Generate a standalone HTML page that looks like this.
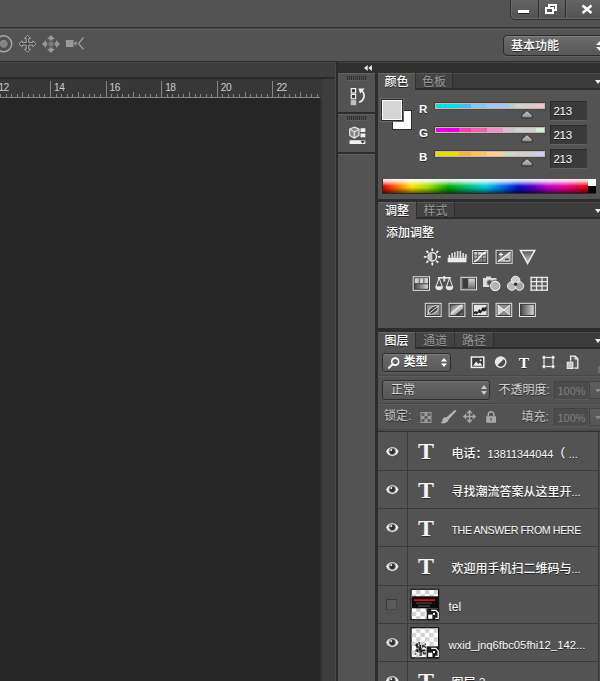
<!DOCTYPE html>
<html lang="zh-CN">
<head>
<meta charset="utf-8">
<title>Photoshop</title>
<style>
html,body{margin:0;padding:0;background:#535353;}
body{width:600px;height:681px;overflow:hidden;position:relative;font-family:"Liberation Sans","Noto Sans CJK SC",sans-serif;font-size:12px;color:#e6e6e6;}
#root{position:absolute;left:0;top:0;width:600px;height:681px;overflow:hidden;background:#535353;}
.a{position:absolute;}
.t{position:absolute;white-space:nowrap;line-height:14px;font-size:12px;color:#f0f0f0;text-shadow:0 1px 0 rgba(0,0,0,.55);}
svg{position:absolute;overflow:visible;}
.panel{position:absolute;background:#535353;box-shadow:inset 0 1px 0 #626262;}
.tabbar{position:absolute;left:0;top:0;right:0;height:15px;background:#3b3b3b;border-bottom:2px solid #2c2c2c;box-shadow:inset 0 1px 0 #4a4a4a;}
.tab{position:absolute;top:0;height:15px;box-sizing:border-box;border-right:1px solid #303030;background:#434343;box-shadow:inset 0 1px 0 #565656;}
.tab.on{background:#535353;height:17px;box-shadow:inset 0 1px 0 #666;}
.tab span{position:absolute;left:0;right:0;top:2px;text-align:center;font-size:12px;line-height:14px;color:#9a9a9a;text-shadow:0 1px 0 rgba(0,0,0,.4);}
.tab.on span{color:#fff;font-weight:500;text-shadow:0 1px 0 rgba(0,0,0,.6);}
.inp{position:absolute;background:#3a3a3a;box-shadow:inset 1px 1px 0 #2c2c2c, 0 1px 0 #606060;}
.dd{position:absolute;box-sizing:border-box;border:1px solid #2d2d2d;border-radius:3px;background:linear-gradient(#6b6b6b,#595959);box-shadow:inset 0 1px 0 #7c7c7c,0 1px 0 #5e5e5e;}
</style>
</head>
<body>
<div id="root">
<div class="a" style="left:0px;top:0px;width:600px;height:27px;background:#535353;"></div>
<div class="a" style="left:0px;top:27px;width:600px;height:1px;background:#2f2f2f;"></div>
<div class="a" style="left:0px;top:28px;width:600px;height:1px;background:#4b4b4b;"></div>
<div class="a" style="left:0px;top:29px;width:600px;height:1px;background:#5e5e5e;"></div>
<div class="a" style="left:510px;top:-2px;width:100px;height:20px;border:1px solid #2e2e2e;border-radius:0 0 0 5px;background:linear-gradient(#646464,#525252);box-shadow:inset 1px -1px 0 #6a6a6a;"><div class="a" style="left:27px;top:0;width:1px;height:19px;background:#2e2e2e;box-shadow:1px 0 0 #686868;"></div><div class="a" style="left:54px;top:0;width:1px;height:19px;background:#2e2e2e;box-shadow:1px 0 0 #686868;"></div></div>
<div class="a" style="left:518px;top:10px;width:11px;height:3px;background:#fff;box-shadow:0 1px 0 #222;"></div>
<svg style="left:545px;top:4px" width="13" height="11" viewBox="0 0 13 11"><g fill="none" stroke="#fff" stroke-width="2"><rect x="4" y="1" width="7" height="5"/><rect x="1" y="4" width="7" height="5" fill="#565656"/></g></svg>
<svg style="left:581px;top:5px" width="12" height="9" viewBox="0 0 12 9"><path d="M1.5 0.5 L10.5 8 M10.5 0.5 L1.5 8" stroke="#fff" stroke-width="2.6" fill="none"/></svg>
<div class="a" style="left:0px;top:30px;width:600px;height:31px;background:#535353;"></div>
<div class="a" style="left:0px;top:61px;width:600px;height:1px;background:#2e2e2e;"></div>
<div class="a" style="left:503px;top:35px;width:110px;height:19px;border:1px solid #2b2b2b;border-radius:4px;background:linear-gradient(#6d6d6d,#585858);box-shadow:inset 0 1px 0 #808080,0 1px 0 #626262;"></div>
<div class="t" style="left:511px;top:39px;color:#fff;font-weight:500;">基本功能</div>
<svg style="left:596px;top:41px" width="8" height="10" viewBox="0 0 8 10"><path d="M4 0 L0 4 L8 4 Z M0 6 L8 6 L4 10 Z" fill="#fff"/></svg>
<svg style="left:0;top:34px" width="90" height="22" viewBox="0 0 90 22"><g fill="none" stroke="#a8a8a8">
<circle cx="3.7" cy="9.8" r="8" stroke-width="1.4"/>
<circle cx="3.7" cy="9.8" r="4.6" fill="#858585" stroke="#444" stroke-width="1"/>
<path d="M27.5 1.3 L30.5 4.4 L28.7 4.4 L28.7 8.6 L32.9 8.6 L32.9 6.8 L36.0 9.8 L32.9 12.8 L32.9 11.0 L28.7 11.0 L28.7 15.2 L30.5 15.2 L27.5 18.3 L24.5 15.2 L26.3 15.2 L26.3 11.0 L22.1 11.0 L22.1 12.8 L19.0 9.8 L22.1 6.8 L22.1 8.6 L26.3 8.6 L26.3 4.4 L24.5 4.4 Z" stroke-width="1" fill="#404040"/>
</g>
<path d="M51.0 1.0 L55.0 5.0 L52.6 5.0 L52.6 8.4 L56.0 8.4 L56.0 6.0 L60.0 10.0 L56.0 14.0 L56.0 11.6 L52.6 11.6 L52.6 15.0 L55.0 15.0 L51.0 19.0 L47.0 15.0 L49.4 15.0 L49.4 11.6 L46.0 11.6 L46.0 14.0 L42.0 10.0 L46.0 6.0 L46.0 8.4 L49.4 8.4 L49.4 5.0 L47.0 5.0 Z" fill="#989898"/>
<circle cx="51" cy="10" r="3.3" fill="#7a7a7a" stroke="#484848" stroke-width=".9"/>
<g fill="#999">
<rect x="66" y="6" width="7.5" height="7"/>
<path d="M73.5 9.5 L76.5 7 L76.5 12 Z"/>
</g>
<path d="M83.5 3.5 L78.5 9.5 L83.5 15.5" fill="none" stroke="#a0a0a0" stroke-width="1.2"/></svg>
<div class="a" style="left:0px;top:62px;width:336px;height:15px;background:#3d3d3d;box-shadow:inset 0 1px 0 #474747;"></div>
<div class="a" style="left:0px;top:77px;width:336px;height:2px;background:#2a2a2a;"></div>
<div class="a" style="left:0px;top:79px;width:336px;height:1px;background:#313131;"></div>
<div class="a" style="left:0px;top:80px;width:322px;height:18px;background:#373737;"></div>
<div class="a" style="left:0px;top:98px;width:320px;height:583px;background:#262626;"></div>
<div class="a" style="left:320px;top:98px;width:2px;height:583px;background:#2f2f2f;"></div>
<div class="a" style="left:322px;top:79px;width:13px;height:602px;background:#3d3d3d;"></div>
<div class="a" style="left:335px;top:62px;width:1px;height:619px;background:#4b4b4b;"></div>
<div class="a" style="left:336px;top:62px;width:2px;height:619px;background:#2b2b2b;"></div>
<svg style="left:0;top:79px" width="322" height="19" viewBox="0 0 322 19"><rect x="0" y="18" width="320" height="1" fill="#868686"/><rect x="0" y="15" width="1" height="3" fill="#868686"/><rect x="6" y="15" width="1" height="3" fill="#868686"/><rect x="11" y="15" width="1" height="3" fill="#868686"/><rect x="17" y="15" width="1" height="3" fill="#868686"/><rect x="22" y="13" width="1" height="5" fill="#868686"/><rect x="28" y="15" width="1" height="3" fill="#868686"/><rect x="33" y="15" width="1" height="3" fill="#868686"/><rect x="39" y="15" width="1" height="3" fill="#868686"/><rect x="44" y="15" width="1" height="3" fill="#868686"/><text x="-1.6" y="12.3" font-size="10.2" letter-spacing="-0.5" fill="#cdcdcd" font-family="Liberation Sans, sans-serif">12</text><rect x="50" y="2" width="1" height="16" fill="#868686"/><rect x="56" y="15" width="1" height="3" fill="#868686"/><rect x="61" y="15" width="1" height="3" fill="#868686"/><rect x="67" y="15" width="1" height="3" fill="#868686"/><rect x="72" y="15" width="1" height="3" fill="#868686"/><rect x="78" y="13" width="1" height="5" fill="#868686"/><rect x="83" y="15" width="1" height="3" fill="#868686"/><rect x="89" y="15" width="1" height="3" fill="#868686"/><rect x="94" y="15" width="1" height="3" fill="#868686"/><rect x="100" y="15" width="1" height="3" fill="#868686"/><text x="54.0" y="12.3" font-size="10.2" letter-spacing="-0.5" fill="#cdcdcd" font-family="Liberation Sans, sans-serif">14</text><rect x="106" y="2" width="1" height="16" fill="#868686"/><rect x="111" y="15" width="1" height="3" fill="#868686"/><rect x="117" y="15" width="1" height="3" fill="#868686"/><rect x="122" y="15" width="1" height="3" fill="#868686"/><rect x="128" y="15" width="1" height="3" fill="#868686"/><rect x="133" y="13" width="1" height="5" fill="#868686"/><rect x="139" y="15" width="1" height="3" fill="#868686"/><rect x="145" y="15" width="1" height="3" fill="#868686"/><rect x="150" y="15" width="1" height="3" fill="#868686"/><rect x="156" y="15" width="1" height="3" fill="#868686"/><text x="109.6" y="12.3" font-size="10.2" letter-spacing="-0.5" fill="#cdcdcd" font-family="Liberation Sans, sans-serif">16</text><rect x="161" y="2" width="1" height="16" fill="#868686"/><rect x="167" y="15" width="1" height="3" fill="#868686"/><rect x="172" y="15" width="1" height="3" fill="#868686"/><rect x="178" y="15" width="1" height="3" fill="#868686"/><rect x="183" y="15" width="1" height="3" fill="#868686"/><rect x="189" y="13" width="1" height="5" fill="#868686"/><rect x="195" y="15" width="1" height="3" fill="#868686"/><rect x="200" y="15" width="1" height="3" fill="#868686"/><rect x="206" y="15" width="1" height="3" fill="#868686"/><rect x="211" y="15" width="1" height="3" fill="#868686"/><text x="165.2" y="12.3" font-size="10.2" letter-spacing="-0.5" fill="#cdcdcd" font-family="Liberation Sans, sans-serif">18</text><rect x="217" y="2" width="1" height="16" fill="#868686"/><rect x="222" y="15" width="1" height="3" fill="#868686"/><rect x="228" y="15" width="1" height="3" fill="#868686"/><rect x="233" y="15" width="1" height="3" fill="#868686"/><rect x="239" y="15" width="1" height="3" fill="#868686"/><rect x="245" y="13" width="1" height="5" fill="#868686"/><rect x="250" y="15" width="1" height="3" fill="#868686"/><rect x="256" y="15" width="1" height="3" fill="#868686"/><rect x="261" y="15" width="1" height="3" fill="#868686"/><rect x="267" y="15" width="1" height="3" fill="#868686"/><text x="220.8" y="12.3" font-size="10.2" letter-spacing="-0.5" fill="#cdcdcd" font-family="Liberation Sans, sans-serif">20</text><rect x="272" y="2" width="1" height="16" fill="#868686"/><rect x="278" y="15" width="1" height="3" fill="#868686"/><rect x="284" y="15" width="1" height="3" fill="#868686"/><rect x="289" y="15" width="1" height="3" fill="#868686"/><rect x="295" y="15" width="1" height="3" fill="#868686"/><rect x="300" y="13" width="1" height="5" fill="#868686"/><rect x="306" y="15" width="1" height="3" fill="#868686"/><rect x="311" y="15" width="1" height="3" fill="#868686"/><rect x="317" y="15" width="1" height="3" fill="#868686"/><text x="276.4" y="12.3" font-size="10.2" letter-spacing="-0.5" fill="#cdcdcd" font-family="Liberation Sans, sans-serif">22</text></svg>
<div class="a" style="left:338px;top:62px;width:262px;height:619px;background:#2c2c2c;"></div>
<div class="a" style="left:338px;top:62px;width:262px;height:1px;background:#444;"></div>
<div class="a" style="left:338px;top:63px;width:262px;height:10px;background:#303030;"></div>
<svg style="left:363.5px;top:64.5px" width="8" height="6" viewBox="0 0 8 6"><path d="M3.7 0 L3.7 6 L0 3 Z M7.9 0 L7.9 6 L4.2 3 Z" fill="#e8e8e8"/></svg>
<div class="panel" style="left:338px;top:73px;width:37px;height:39px;"></div>
<div class="panel" style="left:338px;top:114px;width:37px;height:38px;"></div>
<div class="panel" style="left:338px;top:154px;width:37px;height:527px;"></div>
<svg style="left:338px;top:73px" width="37" height="82" viewBox="338 73 37 82"><rect x="347" y="76" width="1" height="4" fill="#2c2c2c"/><rect x="347" y="80" width="1" height="1" fill="#686868"/><rect x="349" y="76" width="1" height="4" fill="#2c2c2c"/><rect x="349" y="80" width="1" height="1" fill="#686868"/><rect x="351" y="76" width="1" height="4" fill="#2c2c2c"/><rect x="351" y="80" width="1" height="1" fill="#686868"/><rect x="353" y="76" width="1" height="4" fill="#2c2c2c"/><rect x="353" y="80" width="1" height="1" fill="#686868"/><rect x="355" y="76" width="1" height="4" fill="#2c2c2c"/><rect x="355" y="80" width="1" height="1" fill="#686868"/><rect x="357" y="76" width="1" height="4" fill="#2c2c2c"/><rect x="357" y="80" width="1" height="1" fill="#686868"/><rect x="359" y="76" width="1" height="4" fill="#2c2c2c"/><rect x="359" y="80" width="1" height="1" fill="#686868"/><rect x="361" y="76" width="1" height="4" fill="#2c2c2c"/><rect x="361" y="80" width="1" height="1" fill="#686868"/><rect x="363" y="76" width="1" height="4" fill="#2c2c2c"/><rect x="363" y="80" width="1" height="1" fill="#686868"/><rect x="365" y="76" width="1" height="4" fill="#2c2c2c"/><rect x="365" y="80" width="1" height="1" fill="#686868"/><rect x="347" y="116" width="1" height="4" fill="#2c2c2c"/><rect x="347" y="120" width="1" height="1" fill="#686868"/><rect x="349" y="116" width="1" height="4" fill="#2c2c2c"/><rect x="349" y="120" width="1" height="1" fill="#686868"/><rect x="351" y="116" width="1" height="4" fill="#2c2c2c"/><rect x="351" y="120" width="1" height="1" fill="#686868"/><rect x="353" y="116" width="1" height="4" fill="#2c2c2c"/><rect x="353" y="120" width="1" height="1" fill="#686868"/><rect x="355" y="116" width="1" height="4" fill="#2c2c2c"/><rect x="355" y="120" width="1" height="1" fill="#686868"/><rect x="357" y="116" width="1" height="4" fill="#2c2c2c"/><rect x="357" y="120" width="1" height="1" fill="#686868"/><rect x="359" y="116" width="1" height="4" fill="#2c2c2c"/><rect x="359" y="120" width="1" height="1" fill="#686868"/><rect x="361" y="116" width="1" height="4" fill="#2c2c2c"/><rect x="361" y="120" width="1" height="1" fill="#686868"/><rect x="363" y="116" width="1" height="4" fill="#2c2c2c"/><rect x="363" y="120" width="1" height="1" fill="#686868"/><rect x="365" y="116" width="1" height="4" fill="#2c2c2c"/><rect x="365" y="120" width="1" height="1" fill="#686868"/>
<g fill="#3a3a3a" stroke="#f0f0f0" stroke-width="1.2"><rect x="351.3" y="88.6" width="4.3" height="4.3"/><rect x="351.3" y="94.4" width="4.3" height="4.3"/></g>
<rect x="350.7" y="100" width="5.5" height="5.2" fill="#bdbdbd"/>
<path d="M359 102.3 C364.5 100.5 365.8 94 361.2 90.2" fill="none" stroke="#f0f0f0" stroke-width="1.7"/>
<path d="M358.4 88.4 L364.6 88.6 L360.2 93.6 Z" fill="#f0f0f0"/>
<path d="M354.3 127 L359 129.2 L359 135.4 L354.3 138 L349.7 135.4 L349.7 129.2 Z" fill="#868686" stroke="#f0f0f0" stroke-width="1.1"/>
<path d="M349.9 129.4 L354.3 131.8 L358.8 129.4 M354.3 131.8 L354.3 137.6" fill="none" stroke="#f0f0f0" stroke-width="1"/>
<rect x="360.5" y="128.2" width="4.8" height="3.8" fill="#f0f0f0"/><rect x="360.5" y="133.5" width="4.8" height="3.8" fill="#f0f0f0"/>
<rect x="349.6" y="140.2" width="15.7" height="3.8" fill="#f0f0f0"/><path d="M360.6 140.8 L364.8 140.8 L362.7 143.6 Z" fill="#222"/>
</svg>
<div class="panel" style="left:378px;top:73px;width:222px;height:126px;">
<div class="tabbar"></div><div class="tab on" style="left:0;width:38px;"><span>颜色</span></div><div class="tab" style="left:38px;width:37px;"><span>色板</span></div>
<svg style="left:217px;top:7px" width="6" height="4" viewBox="0 0 6 4"><path d="M0 0 L6 0 L3 4 Z" fill="#f0f0f0"/></svg>
<div class="a" style="left:14px;top:37px;width:18px;height:18px;background:#fff;border:1px solid #2a2a2a;"></div>
<div class="a" style="left:3px;top:26px;width:20px;height:20px;background:#d5d5d5;border:1px solid #2a2a2a;box-shadow:inset 0 0 0 1px #fff, 0 0 0 1px #6a6a6a;"></div>
<div class="t" style="left:41px;top:29px;font-weight:bold;font-size:11.5px;color:#fff;">R</div>
<div class="t" style="left:41px;top:53px;font-weight:bold;font-size:11.5px;color:#fff;">G</div>
<div class="t" style="left:41px;top:77px;font-weight:bold;font-size:11.5px;color:#fff;">B</div>
<div class="a" style="left:57px;top:30px;width:110px;height:6px;background:#cdb8b0;box-shadow:-1px -1px 0 #3c3c3c,0 0 0 1px #484848;"><div class="a" style="left:1px;top:1px;width:23px;height:4px;background:#00e0e0;"></div><div class="a" style="left:24px;top:1px;width:12px;height:4px;background:#48b8f8;"></div><div class="a" style="left:36px;top:1px;width:16px;height:4px;background:#80c8f8;"></div><div class="a" style="left:52px;top:1px;width:16px;height:4px;background:#a0c8f8;"></div><div class="a" style="left:68px;top:1px;width:12px;height:4px;background:linear-gradient(90deg,#a0c8f8 58%,#b0d8b0 58%);"></div><div class="a" style="left:80px;top:1px;width:21px;height:4px;background:#d0d0d0;"></div><div class="a" style="left:101px;top:1px;width:8px;height:4px;background:#f8c0c8;"></div></div><svg style="left:143px;top:37px" width="12" height="9" viewBox="0 0 12 9"><defs><linearGradient id="th103" x1="0" y1="0" x2="0" y2="1"><stop offset="0" stop-color="#c8c8c8"/><stop offset="1" stop-color="#8c8c8c"/></linearGradient></defs><path d="M6 0.6 L11.3 5 L11.3 7.9 L0.7 7.9 L0.7 5 Z" fill="url(#th103)" stroke="#2c2c2c" stroke-width="1" stroke-linejoin="round"/></svg>
<div class="a" style="left:57px;top:54px;width:110px;height:6px;background:#cdb8b0;box-shadow:-1px -1px 0 #3c3c3c,0 0 0 1px #484848;"><div class="a" style="left:1px;top:1px;width:23px;height:4px;background:#e000e0;"></div><div class="a" style="left:24px;top:1px;width:12px;height:4px;background:#f040b0;"></div><div class="a" style="left:36px;top:1px;width:16px;height:4px;background:#f060b0;"></div><div class="a" style="left:52px;top:1px;width:16px;height:4px;background:#f090c8;"></div><div class="a" style="left:68px;top:1px;width:12px;height:4px;background:#d0c0d0;"></div><div class="a" style="left:80px;top:1px;width:21px;height:4px;background:#d0d0d0;"></div><div class="a" style="left:101px;top:1px;width:8px;height:4px;background:#d0f0d0;"></div></div><svg style="left:143px;top:61px" width="12" height="9" viewBox="0 0 12 9"><defs><linearGradient id="th127" x1="0" y1="0" x2="0" y2="1"><stop offset="0" stop-color="#c8c8c8"/><stop offset="1" stop-color="#8c8c8c"/></linearGradient></defs><path d="M6 0.6 L11.3 5 L11.3 7.9 L0.7 7.9 L0.7 5 Z" fill="url(#th127)" stroke="#2c2c2c" stroke-width="1" stroke-linejoin="round"/></svg>
<div class="a" style="left:57px;top:78px;width:110px;height:6px;background:#cdb8b0;box-shadow:-1px -1px 0 #3c3c3c,0 0 0 1px #484848;"><div class="a" style="left:1px;top:1px;width:23px;height:4px;background:#e0e000;"></div><div class="a" style="left:24px;top:1px;width:12px;height:4px;background:#ffb040;"></div><div class="a" style="left:36px;top:1px;width:16px;height:4px;background:#ffc060;"></div><div class="a" style="left:52px;top:1px;width:16px;height:4px;background:#ffd090;"></div><div class="a" style="left:68px;top:1px;width:12px;height:4px;background:#c0e0c0;"></div><div class="a" style="left:80px;top:1px;width:21px;height:4px;background:#d0d0d0;"></div><div class="a" style="left:101px;top:1px;width:8px;height:4px;background:#c8d0f8;"></div></div><svg style="left:143px;top:85px" width="12" height="9" viewBox="0 0 12 9"><defs><linearGradient id="th151" x1="0" y1="0" x2="0" y2="1"><stop offset="0" stop-color="#c8c8c8"/><stop offset="1" stop-color="#8c8c8c"/></linearGradient></defs><path d="M6 0.6 L11.3 5 L11.3 7.9 L0.7 7.9 L0.7 5 Z" fill="url(#th151)" stroke="#2c2c2c" stroke-width="1" stroke-linejoin="round"/></svg>
<div class="inp" style="left:172px;top:28px;width:37px;height:19px;"></div>
<div class="t" style="left:175.5px;top:31px;font-size:11.5px;letter-spacing:-0.3px;color:#fff;">213</div>
<div class="inp" style="left:172px;top:52px;width:37px;height:19px;"></div>
<div class="t" style="left:175.5px;top:55px;font-size:11.5px;letter-spacing:-0.3px;color:#fff;">213</div>
<div class="inp" style="left:172px;top:76px;width:37px;height:19px;"></div>
<div class="t" style="left:175.5px;top:79px;font-size:11.5px;letter-spacing:-0.3px;color:#fff;">213</div>
<div class="a" style="left:4px;top:106px;width:214px;height:15px;background:#2a2a2a;">
<div class="a" style="left:1px;top:0;width:205px;height:14px;background:linear-gradient(90deg,#e00000 0%,#ff5000 5%,#ffe000 14%,#a0e000 22%,#00a800 32%,#00c070 41%,#00c8e0 50%,#0070e8 58%,#0010c8 66%,#5000c0 73%,#c000c8 81%,#e80090 89%,#e00000 100%);"></div>
<div class="a" style="left:1px;top:0;width:205px;height:14px;background:linear-gradient(180deg,rgba(255,255,255,.95) 0%,rgba(255,255,255,.75) 18%,rgba(255,255,255,0) 52%,rgba(0,0,0,0) 60%,rgba(0,0,0,.6) 100%);"></div>
<div class="a" style="left:206px;top:0;width:8px;height:7px;background:#fff;"></div>
<div class="a" style="left:206px;top:7px;width:8px;height:7px;background:#000;"></div>
</div>
</div>
<div class="panel" style="left:378px;top:202px;width:222px;height:126px;">
<div class="tabbar"></div><div class="tab on" style="left:0;width:39px;"><span>调整</span></div><div class="tab" style="left:39px;width:38px;"><span>样式</span></div>
<svg style="left:217px;top:7px" width="6" height="4" viewBox="0 0 6 4"><path d="M0 0 L6 0 L3 4 Z" fill="#f0f0f0"/></svg>
<div class="t" style="left:8px;top:24px;color:#fff;font-weight:500;">添加调整</div>
<svg style="left:0;top:0" width="222" height="126" viewBox="378 202 222 126"><defs><linearGradient id="gv" x1="0" y1="0" x2="0" y2="1"><stop offset="0" stop-color="#d8d8d8"/><stop offset="1" stop-color="#6e6e6e"/></linearGradient><linearGradient id="gv2" x1="0" y1="0" x2="0" y2="1"><stop offset="0" stop-color="#555"/><stop offset="1" stop-color="#cfcfcf"/></linearGradient><linearGradient id="gh" x1="0" y1="0" x2="1" y2="0"><stop offset="0" stop-color="#4a4a4a"/><stop offset="1" stop-color="#d4d4d4"/></linearGradient><linearGradient id="gd" x1="0" y1="0" x2="1" y2="1"><stop offset="0" stop-color="#5a5a5a"/><stop offset=".5" stop-color="#c8c8c8"/><stop offset="1" stop-color="#5a5a5a"/></linearGradient></defs><g stroke="#f0f0f0" stroke-width="1.8" stroke-linecap="round"><line x1="438.7" y1="256.8" x2="440.0" y2="256.8"/><line x1="436.8" y1="261.3" x2="437.7" y2="262.2"/><line x1="432.3" y1="263.2" x2="432.3" y2="264.5"/><line x1="427.8" y1="261.3" x2="426.9" y2="262.2"/><line x1="425.9" y1="256.8" x2="424.6" y2="256.8"/><line x1="427.8" y1="252.3" x2="426.9" y2="251.4"/><line x1="432.3" y1="250.4" x2="432.3" y2="249.1"/><line x1="436.8" y1="252.3" x2="437.7" y2="251.4"/></g><circle cx="432.3" cy="256.8" r="4.2" fill="#4a4a4a" stroke="#f0f0f0" stroke-width="1.4"/><path d="M432.3 253.2 a3.6 3.6 0 0 0 0 7.2 Z" fill="#c8c8c8"/><rect x="447.7" y="258" width="18.8" height="4.3" fill="#ececec"/><rect x="448.6" y="255.0" width="1.5" height="3.0" fill="#e4e4e4"/><rect x="450.1" y="256.9" width="1.3" height="1.0" fill="#8c8c8c"/><rect x="451.4" y="253.0" width="1.5" height="5.0" fill="#e4e4e4"/><rect x="452.9" y="256.2" width="1.3" height="1.8" fill="#8c8c8c"/><rect x="454.1" y="252.0" width="1.5" height="6.0" fill="#e4e4e4"/><rect x="455.6" y="255.9" width="1.3" height="2.1" fill="#8c8c8c"/><rect x="456.9" y="251.0" width="1.5" height="7.0" fill="#e4e4e4"/><rect x="458.4" y="255.6" width="1.3" height="2.4" fill="#8c8c8c"/><rect x="459.6" y="251.0" width="1.5" height="7.0" fill="#e4e4e4"/><rect x="461.1" y="255.6" width="1.3" height="2.4" fill="#8c8c8c"/><rect x="462.4" y="253.0" width="1.5" height="5.0" fill="#e4e4e4"/><rect x="463.9" y="256.2" width="1.3" height="1.8" fill="#8c8c8c"/><rect x="465.1" y="254.0" width="1.5" height="4.0" fill="#e4e4e4"/><rect x="466.6" y="256.6" width="1.3" height="1.4" fill="#8c8c8c"/><rect x="472.2" y="250.0" width="16.0" height="14.0" fill="#e6e6e6"/><rect x="473.2" y="251.0" width="14.0" height="12.0" fill="#3a3a3a"/><rect x="474.2" y="252.0" width="12.0" height="10.0" fill="url(#gv)"/><g stroke="#555" stroke-width=".8"><line x1="477.5" y1="251.8" x2="477.5" y2="261.8"/><line x1="482.5" y1="251.8" x2="482.5" y2="261.8"/><line x1="473.8" y1="255.3" x2="486.8" y2="255.3"/><line x1="473.8" y1="258.6" x2="486.8" y2="258.6"/></g><path d="M474 261.5 C480 261 480 252.5 486.5 252" fill="none" stroke="#fff" stroke-width="1.4"/><rect x="495.6" y="249.8" width="17.0" height="14.0" fill="#e6e6e6"/><rect x="496.6" y="250.8" width="15.0" height="12.0" fill="#3a3a3a"/><rect x="497.6" y="251.8" width="13.0" height="10.0" fill="#6a6a6a"/><path d="M510.6 251.8 L510.6 261.8 L497.6 261.8 Z" fill="#c4c4c4"/><path d="M497.8 261.6 L510.4 252" stroke="#f4f4f4" stroke-width="1.2"/><path d="M499 254.5 h4 M501 252.5 v4" stroke="#fff" stroke-width="1.1"/><path d="M505 259.3 h4" stroke="#333" stroke-width="1.2"/><path d="M520.4 250.4 L534.8 250.4 L527.6 263.4 Z" fill="url(#gv2)" stroke="#ececec" stroke-width="1.5" stroke-linejoin="miter"/><rect x="412.7" y="276.3" width="17.3" height="14.5" fill="#e6e6e6"/><rect x="413.7" y="277.3" width="15.3" height="12.5" fill="#3a3a3a"/><rect x="414.7" y="278.3" width="13.3" height="10.5" fill="url(#gh)"/><rect x="414.7" y="278.3" width="13.3" height="5" fill="#d0d0d0"/><rect x="418.7" y="278.3" width="1" height="5" fill="#555"/><rect x="423.4" y="278.3" width="1" height="5" fill="#555"/><rect x="414.7" y="283.3" width="13.3" height="1" fill="#444"/><g fill="#e8e8e8"><rect x="437.8" y="277" width="13" height="1.6"/><rect x="443.4" y="276" width="1.8" height="5.5"/><path d="M439.1 278 L435.9 287 L442.3 287 Z" fill="none" stroke="#e8e8e8" stroke-width="1"/><path d="M435.3 286.5 h7.6 a3.8 3.8 0 0 1 -7.6 0 Z"/><path d="M449.5 278 L446.3 287 L452.7 287 Z" fill="none" stroke="#e8e8e8" stroke-width="1"/><path d="M445.7 286.5 h7.6 a3.8 3.8 0 0 1 -7.6 0 Z"/></g><rect x="460.5" y="276.8" width="16.5" height="13.5" fill="#e6e6e6"/><rect x="461.5" y="277.8" width="14.5" height="11.5" fill="#3a3a3a"/><rect x="462.5" y="278.8" width="12.5" height="9.5" fill="#d0d0d0"/><rect x="462.5" y="278.8" width="6" height="9.5" fill="#3c3c3c"/><rect x="468.5" y="278.8" width="6.5" height="9.5" fill="url(#gv)"/><path d="M483 278 h3 v-1.6 h5 v1.6 h5.5 v9 h-13.5 Z" fill="#dcdcdc"/><circle cx="489.5" cy="282.5" r="2.6" fill="#555" stroke="#999" stroke-width=".8"/><circle cx="495.3" cy="286" r="4.8" fill="#b4b4b4" stroke="#f0f0f0" stroke-width="1.2"/><circle cx="495.3" cy="286" r="5.8" fill="none" stroke="#444" stroke-width=".7"/><circle cx="515.6" cy="280.5" r="4.3" fill="#e2e2e2" fill-opacity=".85" stroke="#f2f2f2" stroke-width="1"/><circle cx="511.8" cy="286.0" r="4.3" fill="#c8c8c8" fill-opacity=".85" stroke="#f2f2f2" stroke-width="1"/><circle cx="519.4" cy="286.0" r="4.3" fill="#b0b0b0" fill-opacity=".85" stroke="#f2f2f2" stroke-width="1"/><path d="M515.6 284.5 L512.8 282.5 L515.6 279 L518.4 282.5 Z" fill="#3a3a3a" opacity=".0"/><circle cx="515.6" cy="284.3" r="1.8" fill="#333"/><rect x="530.5" y="276.8" width="17.5" height="14" fill="#5c5c5c"/><g fill="#e8e8e8"><rect x="530.5" y="276.8" width="1.3" height="14"/><rect x="535.9" y="276.8" width="1.3" height="14"/><rect x="541.3" y="276.8" width="1.3" height="14"/><rect x="546.7" y="276.8" width="1.3" height="14"/><rect x="530.5" y="276.8" width="17.5" height="1.3"/><rect x="530.5" y="281.0" width="17.5" height="1.3"/><rect x="530.5" y="285.3" width="17.5" height="1.3"/><rect x="530.5" y="289.5" width="17.5" height="1.3"/></g><rect x="424.8" y="302.8" width="16.8" height="14.2" fill="#e6e6e6"/><rect x="425.8" y="303.8" width="14.8" height="12.2" fill="#3a3a3a"/><rect x="426.8" y="304.8" width="12.8" height="10.2" fill="#8a8a8a"/><ellipse cx="433.2" cy="310" rx="5.6" ry="3.2" transform="rotate(-35 433.2 310)" fill="#444" stroke="#e8e8e8" stroke-width="1"/><path d="M427 315 L439.5 305" stroke="#ddd" stroke-width="1"/><rect x="448.6" y="302.8" width="16.8" height="14.2" fill="#e6e6e6"/><rect x="449.6" y="303.8" width="14.8" height="12.2" fill="#3a3a3a"/><rect x="450.6" y="304.8" width="12.8" height="10.2" fill="url(#gd)"/><path d="M450.6 313 L460 304.8 L463.4 304.8 L450.6 315 Z" fill="#e0e0e0"/><path d="M455 315 L463.4 308.5 L463.4 312 L459.5 315 Z" fill="#444"/><rect x="471.8" y="302.8" width="16.8" height="14.2" fill="#e6e6e6"/><rect x="472.8" y="303.8" width="14.8" height="12.2" fill="#3a3a3a"/><rect x="473.8" y="304.8" width="12.8" height="10.2" fill="#e4e4e4"/><path d="M473.8 312 l2 -1 l1.5 1 l2 -3 l1.5 1.5 l2 -3.5 l1.5 1 l2.3 -2 v4 l-2 1.5 l-2 -0.5 l-2 2.5 l-2 -1 l-2 2 l-1.5 -1 l-1.3 1 Z" fill="#222"/><rect x="495.6" y="302.8" width="16.6" height="14.2" fill="#e6e6e6"/><rect x="496.6" y="303.8" width="14.6" height="12.2" fill="#3a3a3a"/><rect x="497.6" y="304.8" width="12.6" height="10.2" fill="#8c8c8c"/><path d="M497.6 304.8 L503.9 310 L497.6 315 Z" fill="#d8d8d8"/><path d="M510.2 304.8 L503.9 310 L510.2 315 Z" fill="#c0c0c0"/><path d="M497.6 304.8 L510.2 315 M510.2 304.8 L497.6 315" stroke="#f4f4f4" stroke-width="1"/><rect x="519.0" y="302.8" width="16.8" height="14.2" fill="#e6e6e6"/><rect x="520.0" y="303.8" width="14.8" height="12.2" fill="#3a3a3a"/><rect x="521.0" y="304.8" width="12.8" height="10.2" fill="url(#gh)"/></svg>
</div>
<div class="panel" style="left:378px;top:332px;width:222px;height:349px;">
<div class="tabbar"></div><div class="tab on" style="left:0;width:38px;"><span>图层</span></div><div class="tab" style="left:38px;width:39px;"><span>通道</span></div><div class="tab" style="left:77px;width:39px;"><span>路径</span></div>
<svg style="left:217px;top:7px" width="6" height="4" viewBox="0 0 6 4"><path d="M0 0 L6 0 L3 4 Z" fill="#f0f0f0"/></svg>
<div class="dd" style="left:4px;top:21px;width:69px;height:19px;"></div>
<svg style="left:10px;top:25px" width="12" height="12" viewBox="0 0 12 12"><circle cx="7.2" cy="4.6" r="3.5" fill="none" stroke="#fff" stroke-width="1.6"/><path d="M4.6 7.2 L0.9 10.9" stroke="#fff" stroke-width="2" stroke-linecap="round"/></svg>
<div class="t" style="left:25.5px;top:23px;color:#fff;font-weight:bold;">类型</div>
<svg style="left:62.5px;top:26px" width="6" height="9" viewBox="0 0 6 9"><path d="M3 0 L6 3.6 L0 3.6 Z M0 5.4 L6 5.4 L3 9 Z" fill="#fff"/></svg>
<svg style="left:92px;top:23px" width="112" height="16" viewBox="470 355 112 16">
<rect x="471.4" y="357" width="12.4" height="10.4" fill="#3c3c3c" stroke="#f0f0f0" stroke-width="1.5"/>
<path d="M473 365.8 L476.2 361.6 L478.4 364 L480 362.6 L482.4 365.8 Z" fill="#f0f0f0"/><circle cx="480.6" cy="360.2" r="1" fill="#f0f0f0"/>
<circle cx="500.7" cy="362.1" r="5.2" fill="#4a4a4a" stroke="#f0f0f0" stroke-width="1.3"/>
<path d="M497 365.8 A5.2 5.2 0 0 1 504.4 358.4 Z" fill="#e6e6e6"/>
<rect x="544" y="357.5" width="9" height="9" fill="none" stroke="#f0f0f0" stroke-width="1.2"/>
<g fill="#f4f4f4" stroke="#444" stroke-width=".5"><circle cx="544" cy="357.5" r="1.9"/><circle cx="553" cy="357.5" r="1.9"/><circle cx="544" cy="366.5" r="1.9"/><circle cx="553" cy="366.5" r="1.9"/></g>
<path d="M570.6 356.2 h4.6 l2.6 2.6 v9.4 h-7.2 Z" fill="#5e5e5e" stroke="#f4f4f4" stroke-width="1.3"/>
<path d="M575 356.2 v2.8 h2.8" fill="none" stroke="#f4f4f4" stroke-width="1"/>
<rect x="567" y="362" width="6" height="6.6" fill="#c4c4c4" stroke="#f0f0f0" stroke-width="1"/><rect x="566" y="361" width="8" height="8.6" fill="none" stroke="#444" stroke-width=".6"/>
</svg>
<div class="t" style="left:140.8px;top:21px;font-family:'Liberation Serif',serif;font-weight:bold;font-size:15.5px;line-height:20px;color:#fff;">T</div>
<div class="a" style="left:0px;top:43px;width:222px;height:1px;background:#474747;"></div>
<div class="a" style="left:0px;top:44px;width:222px;height:1px;background:#5b5b5b;"></div>
<div class="a" style="left:0px;top:71px;width:222px;height:1px;background:#474747;"></div>
<div class="a" style="left:0px;top:72px;width:222px;height:1px;background:#5b5b5b;"></div>
<div class="dd" style="left:4px;top:48px;width:108px;height:20px;background:linear-gradient(#646464,#575757);box-shadow:inset 0 1px 0 #727272,0 1px 0 #5e5e5e;"></div>
<div class="t" style="left:13px;top:51px;color:#dcdcdc;">正常</div>
<svg style="left:102.5px;top:53px" width="6" height="10" viewBox="0 0 6 10"><path d="M3 0 L6 4 L0 4 Z M0 6 L6 6 L3 10 Z" fill="#c8c8c8"/></svg>
<div class="t" style="left:120.5px;top:51px;color:#d4d4d4;">不透明度:</div>
<div class="a" style="left:176px;top:49px;width:34px;height:18px;background:#4c4c4c;box-shadow:inset 1px 1px 0 #424242, 0 1px 0 #5c5c5c;"></div>
<div class="t" style="left:179.5px;top:52px;color:#808080;text-shadow:none;font-size:11px;">100%</div>
<div class="a" style="left:211px;top:49px;width:14px;height:18px;background:linear-gradient(#5e5e5e,#555);border:1px solid #444;box-sizing:border-box;"></div>
<svg style="left:217px;top:57px" width="6" height="4" viewBox="0 0 6 4"><path d="M0 0 L6 0 L3 3.5 Z" fill="#8a8a8a"/></svg>
<div class="t" style="left:6px;top:77px;color:#c8c8c8;">锁定:</div>
<div class="t" style="left:143.5px;top:78px;color:#c8c8c8;">填充:</div>
<div class="a" style="left:176px;top:76px;width:34px;height:18px;background:#4c4c4c;box-shadow:inset 1px 1px 0 #424242, 0 1px 0 #5c5c5c;"></div>
<div class="t" style="left:179.5px;top:79px;color:#808080;text-shadow:none;font-size:11px;">100%</div>
<div class="a" style="left:211px;top:76px;width:14px;height:18px;background:linear-gradient(#5e5e5e,#555);border:1px solid #444;box-sizing:border-box;"></div>
<svg style="left:217px;top:84px" width="6" height="4" viewBox="0 0 6 4"><path d="M0 0 L6 0 L3 3.5 Z" fill="#8a8a8a"/></svg>
<svg style="left:40px;top:76px" width="82" height="18" viewBox="418 408 82 18">
<rect x="420.5" y="412" width="11" height="11" fill="#9a9a9a"/>
<g fill="#5e5e5e"><rect x="421.5" y="413" width="3" height="3"/><rect x="427.5" y="413" width="3" height="3"/><rect x="424.5" y="416" width="3" height="3"/><rect x="421.5" y="419" width="3" height="3"/><rect x="427.5" y="419" width="3" height="3"/></g>
<path d="M455 409.8 L456.4 411 L448.4 419.8 L446 417.8 Z" fill="#b4b4b4"/>
<path d="M446.2 417.4 C444 416.8 442.6 418.4 442.6 420 C442.6 421.6 441.6 422.4 440.4 422.8 C443.8 424.2 447.8 423.2 448.6 419.6 Z" fill="#b4b4b4"/>
<g fill="#a8a8a8"><path d="M469.5 409.8 L472.6 413.2 L466.4 413.2 Z M469.5 423.2 L472.6 419.8 L466.4 419.8 Z M462.8 416.5 L466.2 413.4 L466.2 419.6 Z M476.2 416.5 L472.8 413.4 L472.8 419.6 Z"/><rect x="468.8" y="412" width="1.4" height="9"/><rect x="465" y="415.8" width="9" height="1.4"/></g>
<path d="M488.3 416.5 v-2 a2.8 2.8 0 0 1 5.6 0 v2" fill="none" stroke="#a8a8a8" stroke-width="1.5"/>
<rect x="486.2" y="416.2" width="9.8" height="6.6" fill="#a8a8a8"/><rect x="490.5" y="418" width="1.2" height="2.6" fill="#555"/>
</svg>
<div class="a" style="left:0px;top:97px;width:222px;height:2px;background:#4a4a4a;"></div>
<div class="a" style="left:0px;top:99px;width:222px;height:1px;background:#303030;"></div>
<div class="a" style="left:0px;top:138px;width:222px;height:1px;background:#3a3a3a;"></div>
<div class="a" style="left:0px;top:176px;width:222px;height:1px;background:#3a3a3a;"></div>
<div class="a" style="left:0px;top:214px;width:222px;height:1px;background:#3a3a3a;"></div>
<div class="a" style="left:0px;top:253px;width:222px;height:1px;background:#3a3a3a;"></div>
<div class="a" style="left:0px;top:291px;width:222px;height:1px;background:#3a3a3a;"></div>
<div class="a" style="left:0px;top:329px;width:222px;height:1px;background:#3a3a3a;"></div>
<div class="a" style="left:29px;top:100px;width:1px;height:249px;background:#3a3a3a;"></div>
<div class="a" style="left:220px;top:100px;width:1px;height:249px;background:#393939;"></div>
<div class="a" style="left:221px;top:100px;width:1px;height:249px;background:#4b4b4b;"></div>
<div class="a" style="left:220px;top:34px;width:2px;height:7px;background:#6e6e6e;"></div>
<svg style="left:7px;top:112.8px" width="14.6" height="13" viewBox="0 0 14 12" preserveAspectRatio="none"><path d="M0.7 6 C3 0 11 0 13.3 6 C11 12 3 12 0.7 6 Z" fill="#f4f4f4" stroke="#404040" stroke-width=".7"/><circle cx="7" cy="5.8" r="3.5" fill="#8a8a8a"/><circle cx="7" cy="5.8" r="2.4" fill="#2a2a2a"/><circle cx="6" cy="4.7" r="1" fill="#eee"/></svg>
<div class="t" style="left:40px;top:106.3px;font-family:'Liberation Serif',serif;font-weight:bold;font-size:24px;line-height:27px;color:#f4f4f4;text-shadow:0 1px 0 rgba(0,0,0,.5);">T</div>
<div class="t" style="left:73.5px;top:114.8px;color:#fafafa;font-weight:500;">电话：<span style="font-size:10.9px">13811344044</span>（ <span style="font-size:10.7px">...</span></div>
<svg style="left:7px;top:151px" width="14.6" height="13" viewBox="0 0 14 12" preserveAspectRatio="none"><path d="M0.7 6 C3 0 11 0 13.3 6 C11 12 3 12 0.7 6 Z" fill="#f4f4f4" stroke="#404040" stroke-width=".7"/><circle cx="7" cy="5.8" r="3.5" fill="#8a8a8a"/><circle cx="7" cy="5.8" r="2.4" fill="#2a2a2a"/><circle cx="6" cy="4.7" r="1" fill="#eee"/></svg>
<div class="t" style="left:40px;top:144.5px;font-family:'Liberation Serif',serif;font-weight:bold;font-size:24px;line-height:27px;color:#f4f4f4;text-shadow:0 1px 0 rgba(0,0,0,.5);">T</div>
<div class="t" style="left:73.5px;top:153px;color:#fafafa;font-weight:500;">寻找潮流答案从这里开<span style="font-size:10.7px">...</span></div>
<svg style="left:7px;top:189.2px" width="14.6" height="13" viewBox="0 0 14 12" preserveAspectRatio="none"><path d="M0.7 6 C3 0 11 0 13.3 6 C11 12 3 12 0.7 6 Z" fill="#f4f4f4" stroke="#404040" stroke-width=".7"/><circle cx="7" cy="5.8" r="3.5" fill="#8a8a8a"/><circle cx="7" cy="5.8" r="2.4" fill="#2a2a2a"/><circle cx="6" cy="4.7" r="1" fill="#eee"/></svg>
<div class="t" style="left:40px;top:182.7px;font-family:'Liberation Serif',serif;font-weight:bold;font-size:24px;line-height:27px;color:#f4f4f4;text-shadow:0 1px 0 rgba(0,0,0,.5);">T</div>
<div class="t" style="left:73.5px;top:191.2px;color:#fafafa;font-weight:500;"><span style="font-size:10.7px;letter-spacing:-0.42px">THE ANSWER FROM HERE</span></div>
<svg style="left:7px;top:227.6px" width="14.6" height="13" viewBox="0 0 14 12" preserveAspectRatio="none"><path d="M0.7 6 C3 0 11 0 13.3 6 C11 12 3 12 0.7 6 Z" fill="#f4f4f4" stroke="#404040" stroke-width=".7"/><circle cx="7" cy="5.8" r="3.5" fill="#8a8a8a"/><circle cx="7" cy="5.8" r="2.4" fill="#2a2a2a"/><circle cx="6" cy="4.7" r="1" fill="#eee"/></svg>
<div class="t" style="left:40px;top:221.1px;font-family:'Liberation Serif',serif;font-weight:bold;font-size:24px;line-height:27px;color:#f4f4f4;text-shadow:0 1px 0 rgba(0,0,0,.5);">T</div>
<div class="t" style="left:73.5px;top:229.6px;color:#fafafa;font-weight:500;">欢迎用手机扫二维码与<span style="font-size:10.7px">...</span></div>
<div class="t" style="left:70.5px;top:267.6px;color:#fafafa;font-weight:500;">tel</div>
<svg style="left:7px;top:304px" width="14.6" height="13" viewBox="0 0 14 12" preserveAspectRatio="none"><path d="M0.7 6 C3 0 11 0 13.3 6 C11 12 3 12 0.7 6 Z" fill="#f4f4f4" stroke="#404040" stroke-width=".7"/><circle cx="7" cy="5.8" r="3.5" fill="#8a8a8a"/><circle cx="7" cy="5.8" r="2.4" fill="#2a2a2a"/><circle cx="6" cy="4.7" r="1" fill="#eee"/></svg>
<div class="t" style="left:70.5px;top:306px;color:#fafafa;font-weight:500;"><span style="font-size:11.3px">wxid_jnq6fbc05fhi12_142...</span></div>
<svg style="left:7px;top:342.2px" width="14.6" height="13" viewBox="0 0 14 12" preserveAspectRatio="none"><path d="M0.7 6 C3 0 11 0 13.3 6 C11 12 3 12 0.7 6 Z" fill="#f4f4f4" stroke="#404040" stroke-width=".7"/><circle cx="7" cy="5.8" r="3.5" fill="#8a8a8a"/><circle cx="7" cy="5.8" r="2.4" fill="#2a2a2a"/><circle cx="6" cy="4.7" r="1" fill="#eee"/></svg>
<div class="t" style="left:40px;top:335.7px;font-family:'Liberation Serif',serif;font-weight:bold;font-size:24px;line-height:27px;color:#f4f4f4;text-shadow:0 1px 0 rgba(0,0,0,.5);">T</div>
<div class="t" style="left:73.5px;top:344.2px;color:#fafafa;font-weight:500;">图层 2</div>
<div class="a" style="left:8px;top:267px;width:11px;height:11px;background:#5b5b5b;box-shadow:inset 1px 1px 0 #383838,inset -1px -1px 0 #484848;"></div>
<svg style="left:32px;top:256px" width="30" height="72" viewBox="410 588 30 72"><rect x="410.5" y="588.7" width="28.7" height="31.6" fill="#111"/><rect x="411.7" y="589.9" width="26.3" height="29.2" fill="#fff"/><rect x="416.1" y="589.9" width="4.4" height="4.4" fill="#d0d0d0"/><rect x="424.9" y="589.9" width="4.4" height="4.4" fill="#d0d0d0"/><rect x="433.7" y="589.9" width="4.3" height="4.4" fill="#d0d0d0"/><rect x="411.7" y="594.3" width="4.4" height="4.4" fill="#d0d0d0"/><rect x="420.5" y="594.3" width="4.4" height="4.4" fill="#d0d0d0"/><rect x="429.3" y="594.3" width="4.4" height="4.4" fill="#d0d0d0"/><rect x="416.1" y="598.7" width="4.4" height="4.4" fill="#d0d0d0"/><rect x="424.9" y="598.7" width="4.4" height="4.4" fill="#d0d0d0"/><rect x="433.7" y="598.7" width="4.3" height="4.4" fill="#d0d0d0"/><rect x="411.7" y="603.1" width="4.4" height="4.4" fill="#d0d0d0"/><rect x="420.5" y="603.1" width="4.4" height="4.4" fill="#d0d0d0"/><rect x="429.3" y="603.1" width="4.4" height="4.4" fill="#d0d0d0"/><rect x="416.1" y="607.5" width="4.4" height="4.4" fill="#d0d0d0"/><rect x="424.9" y="607.5" width="4.4" height="4.4" fill="#d0d0d0"/><rect x="433.7" y="607.5" width="4.3" height="4.4" fill="#d0d0d0"/><rect x="411.7" y="611.9" width="4.4" height="4.4" fill="#d0d0d0"/><rect x="420.5" y="611.9" width="4.4" height="4.4" fill="#d0d0d0"/><rect x="429.3" y="611.9" width="4.4" height="4.4" fill="#d0d0d0"/><rect x="416.1" y="616.3" width="4.4" height="2.8" fill="#d0d0d0"/><rect x="424.9" y="616.3" width="4.4" height="2.8" fill="#d0d0d0"/><rect x="433.7" y="616.3" width="4.3" height="2.8" fill="#d0d0d0"/><rect x="411.7" y="596.3" width="26.3" height="12" fill="#0a0a0a"/><rect x="414" y="599.3" width="21" height="1.8" fill="#e01010"/><rect x="416" y="602.6" width="16" height="1" fill="#555"/><rect x="418" y="605.6" width="12" height="1" fill="#666"/><rect x="426.7" y="608.3" width="12.5" height="12" fill="#1a1a1a"/><path d="M431.2 610.3 h4.5 l2.5 2.5 v5.5 h-3" fill="none" stroke="#fff" stroke-width="1.3"/><rect x="428.2" y="614.6" width="4.2" height="4.2" fill="#fff"/><rect x="433" y="612.9" width="2" height="2" fill="#fff"/><rect x="410.5" y="627.2" width="28.7" height="31.2" fill="#111"/><rect x="411.7" y="628.4" width="26.3" height="28.8" fill="#fff"/><rect x="416.1" y="628.4" width="4.4" height="4.4" fill="#d4d4d4"/><rect x="424.9" y="628.4" width="4.4" height="4.4" fill="#d4d4d4"/><rect x="433.7" y="628.4" width="4.3" height="4.4" fill="#d4d4d4"/><rect x="411.7" y="632.8" width="4.4" height="4.4" fill="#d4d4d4"/><rect x="420.5" y="632.8" width="4.4" height="4.4" fill="#d4d4d4"/><rect x="429.3" y="632.8" width="4.4" height="4.4" fill="#d4d4d4"/><rect x="416.1" y="637.2" width="4.4" height="4.4" fill="#d4d4d4"/><rect x="424.9" y="637.2" width="4.4" height="4.4" fill="#d4d4d4"/><rect x="433.7" y="637.2" width="4.3" height="4.4" fill="#d4d4d4"/><rect x="411.7" y="641.6" width="4.4" height="4.4" fill="#d4d4d4"/><rect x="420.5" y="641.6" width="4.4" height="4.4" fill="#d4d4d4"/><rect x="429.3" y="641.6" width="4.4" height="4.4" fill="#d4d4d4"/><rect x="416.1" y="646" width="4.4" height="4.4" fill="#d4d4d4"/><rect x="424.9" y="646" width="4.4" height="4.4" fill="#d4d4d4"/><rect x="433.7" y="646" width="4.3" height="4.4" fill="#d4d4d4"/><rect x="411.7" y="650.4" width="4.4" height="4.4" fill="#d4d4d4"/><rect x="420.5" y="650.4" width="4.4" height="4.4" fill="#d4d4d4"/><rect x="429.3" y="650.4" width="4.4" height="4.4" fill="#d4d4d4"/><rect x="416.1" y="654.8" width="4.4" height="2.4" fill="#d4d4d4"/><rect x="424.9" y="654.8" width="4.4" height="2.4" fill="#d4d4d4"/><rect x="433.7" y="654.8" width="4.3" height="2.4" fill="#d4d4d4"/><rect x="418.2" y="643.6" width="2.0" height="1.1" fill="#222"/><rect x="418.7" y="642.3" width="1.8" height="1.1" fill="#555"/><rect x="419.2" y="644.9" width="1.9" height="1.1" fill="#222"/><rect x="424.5" y="650.3" width="1.9" height="1.1" fill="#555"/><rect x="415.5" y="644.6" width="1.9" height="1.2" fill="#555"/><rect x="416.4" y="643.1" width="1.5" height="2.3" fill="#333"/><rect x="416.0" y="649.5" width="1.3" height="1.2" fill="#222"/><rect x="420.6" y="650.2" width="1.8" height="1.9" fill="#111"/><rect x="419.7" y="654.4" width="1.6" height="1.4" fill="#333"/><rect x="422.0" y="644.9" width="1.9" height="1.8" fill="#111"/><rect x="422.3" y="645.5" width="2.6" height="1.2" fill="#555"/><rect x="416.6" y="646.3" width="2.5" height="1.7" fill="#222"/><rect x="422.6" y="649.5" width="2.4" height="1.5" fill="#111"/><rect x="420.9" y="649.6" width="1.7" height="2.3" fill="#111"/><rect x="419.7" y="650.8" width="1.1" height="2.1" fill="#555"/><rect x="417.8" y="646.9" width="2.1" height="1.0" fill="#555"/><rect x="418.6" y="650.1" width="1.8" height="1.3" fill="#111"/><rect x="416.3" y="645.0" width="1.6" height="2.4" fill="#222"/><rect x="416.7" y="647.1" width="1.4" height="1.2" fill="#555"/><rect x="423.6" y="645.4" width="1.7" height="1.6" fill="#555"/><rect x="424.6" y="643.6" width="1.3" height="1.4" fill="#333"/><rect x="415.1" y="653.1" width="1.3" height="1.5" fill="#333"/><rect x="419.2" y="646.7" width="1.9" height="2.5" fill="#222"/><rect x="419.6" y="653.7" width="2.5" height="2.1" fill="#555"/><rect x="419.0" y="647.0" width="1.8" height="1.6" fill="#333"/><rect x="415.7" y="644.4" width="1.3" height="1.5" fill="#222"/><rect x="416.0" y="649.4" width="1.9" height="2.5" fill="#222"/><rect x="415.7" y="644.4" width="1.6" height="2.0" fill="#111"/><rect x="421.0" y="648.1" width="1.2" height="1.8" fill="#555"/><rect x="419.8" y="645.9" width="1.2" height="2.2" fill="#111"/><rect x="419.8" y="651.2" width="1.8" height="1.3" fill="#111"/><rect x="416.5" y="649.1" width="1.0" height="1.8" fill="#222"/><rect x="422.0" y="645.2" width="1.6" height="1.3" fill="#333"/><rect x="420.3" y="652.4" width="1.5" height="1.4" fill="#333"/><rect x="423.1" y="653.0" width="2.2" height="1.4" fill="#555"/><rect x="418.6" y="641.9" width="1.0" height="1.4" fill="#111"/><rect x="416.9" y="650.0" width="1.6" height="2.3" fill="#111"/><rect x="424.6" y="646.6" width="1.4" height="1.4" fill="#333"/><rect x="418.4" y="648.3" width="2.6" height="2.0" fill="#222"/><rect x="419.8" y="650.6" width="2.3" height="1.1" fill="#222"/><rect x="424.1" y="652.5" width="2.2" height="1.8" fill="#333"/><rect x="419.3" y="650.4" width="1.1" height="2.5" fill="#555"/><rect x="419.6" y="651.9" width="1.1" height="1.3" fill="#333"/><rect x="415.3" y="649.8" width="1.7" height="2.0" fill="#555"/><rect x="421.6" y="646.4" width="1.9" height="1.2" fill="#222"/><rect x="423.0" y="651.7" width="1.2" height="2.2" fill="#333"/><rect x="426.7" y="646.4" width="12.5" height="12" fill="#1a1a1a"/><path d="M431.2 648.4 h4.5 l2.5 2.5 v5.5 h-3" fill="none" stroke="#fff" stroke-width="1.3"/><rect x="428.2" y="652.7" width="4.2" height="4.2" fill="#fff"/><rect x="433" y="651" width="2" height="2" fill="#fff"/></svg>
</div>
</div>
</body>
</html>
